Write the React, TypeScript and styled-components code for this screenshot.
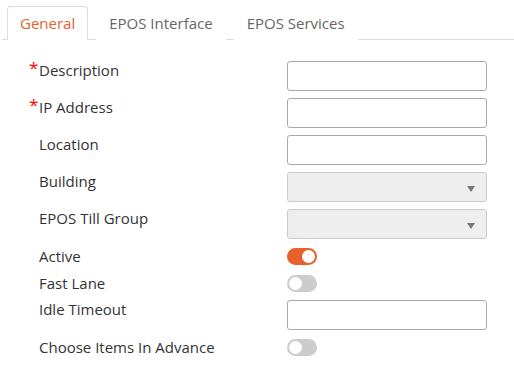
import React, { useState } from 'react';
import styled, { createGlobalStyle } from 'styled-components';

const GlobalStyle = createGlobalStyle`
    body {
        margin: 0;
        background: #fff;
        font-family: 'Open Sans', 'Liberation Sans', sans-serif;
        color: #333;
    }
`;

const Page = styled.div`
    width: 514px;
    height: 377px;
    overflow: hidden;
`;

const TabList = styled.div`
    display: flex;
    padding: 6px 0 0 5px;
    border-bottom: 1px solid #ddd;
    margin: 0 0 0 2px;
`;

const Tab = styled.div<{ active?: boolean }>`
    height: 32px;
    padding: 0 12px;
    margin-right: 8px;
    margin-bottom: -1px;
    display: flex;
    align-items: center;
    font-size: 15px;
    color: ${({ active }) => (active ? '#e8602c' : '#666')};
    border: 1px solid ${({ active }) => (active ? '#ddd' : 'transparent')};
    border-bottom-color: ${({ active }) => (active ? '#fff' : 'transparent')};
    border-radius: 4px 4px 0 0;
    background: #fff;
    cursor: pointer;
`;

const Form = styled.div`
    display: grid;
    grid-template-columns: 258px 200px;
    row-gap: 7px;
    padding: 21px 0 0 29px;
`;

const Label = styled.div`
    display: flex;
    align-items: center;
    align-self: start;
    font-size: 15px;
    line-height: 19px;
    color: #333;
`;

const ToggleLabel = styled(Label)`
    align-self: center;
`;

const Star = styled.span`
    align-self: flex-start;
    width: 10px;
    color: #f00;
    font-size: 17px;
    line-height: 14px;
`;

const TextInput = styled.input`
    box-sizing: border-box;
    width: 200px;
    height: 30px;
    border: 1px solid #aaa;
    border-radius: 3px;
    padding: 0 8px;
    font-family: inherit;
    font-size: 14px;
    outline: none;
`;

const SelectBox = styled.div`
    box-sizing: border-box;
    width: 200px;
    height: 30px;
    border: 1px solid #ccc;
    border-radius: 3px;
    background: #eee;
    display: flex;
    align-items: center;
    justify-content: flex-end;
    padding-right: 11px;
`;

const Caret = styled.span`
    width: 0;
    height: 0;
    margin-top: 3px;
    border-left: 4px solid transparent;
    border-right: 4px solid transparent;
    border-top: 6px solid #777;
`;

const ToggleCell = styled.div`
    height: 20px;
    display: flex;
    align-items: center;
`;

const Switch = styled.div<{ on: boolean }>`
    position: relative;
    width: 30px;
    height: 17px;
    border-radius: 9px;
    background: ${({ on }) => (on ? '#e8602c' : '#ccc')};
    cursor: pointer;

    &::after {
        content: '';
        position: absolute;
        top: 2px;
        left: ${({ on }) => (on ? '15px' : '2px')};
        width: 13px;
        height: 13px;
        border-radius: 50%;
        background: #fff;
    }
`;

function Toggle({ initial }: { initial: boolean }) {
    const [on, setOn] = useState<boolean>(initial);
    return (
        <ToggleCell>
            <Switch on={on} onClick={() => setOn(!on)} />
        </ToggleCell>
    );
}

function FieldLabel({ text, required }: { text: string; required?: boolean }) {
    return (
        <Label>
            <Star>{required ? '*' : ''}</Star>
            {text}
        </Label>
    );
}

function SwitchLabel({ text }: { text: string }) {
    return (
        <ToggleLabel>
            <Star />
            {text}
        </ToggleLabel>
    );
}

export default function App() {
    return (
        <Page>
            <GlobalStyle />
            <TabList>
                <Tab active>General</Tab>
                <Tab>EPOS Interface</Tab>
                <Tab>EPOS Services</Tab>
            </TabList>
            <Form>
                <FieldLabel text="Description" required />
                <TextInput />
                <FieldLabel text="IP Address" required />
                <TextInput />
                <FieldLabel text="Location" />
                <TextInput />
                <FieldLabel text="Building" />
                <SelectBox>
                    <Caret />
                </SelectBox>
                <FieldLabel text="EPOS Till Group" />
                <SelectBox>
                    <Caret />
                </SelectBox>
                <SwitchLabel text="Active" />
                <Toggle initial={true} />
                <SwitchLabel text="Fast Lane" />
                <Toggle initial={false} />
                <FieldLabel text="Idle Timeout" />
                <TextInput />
                <SwitchLabel text="Choose Items In Advance" />
                <Toggle initial={false} />
            </Form>
        </Page>
    );
}
